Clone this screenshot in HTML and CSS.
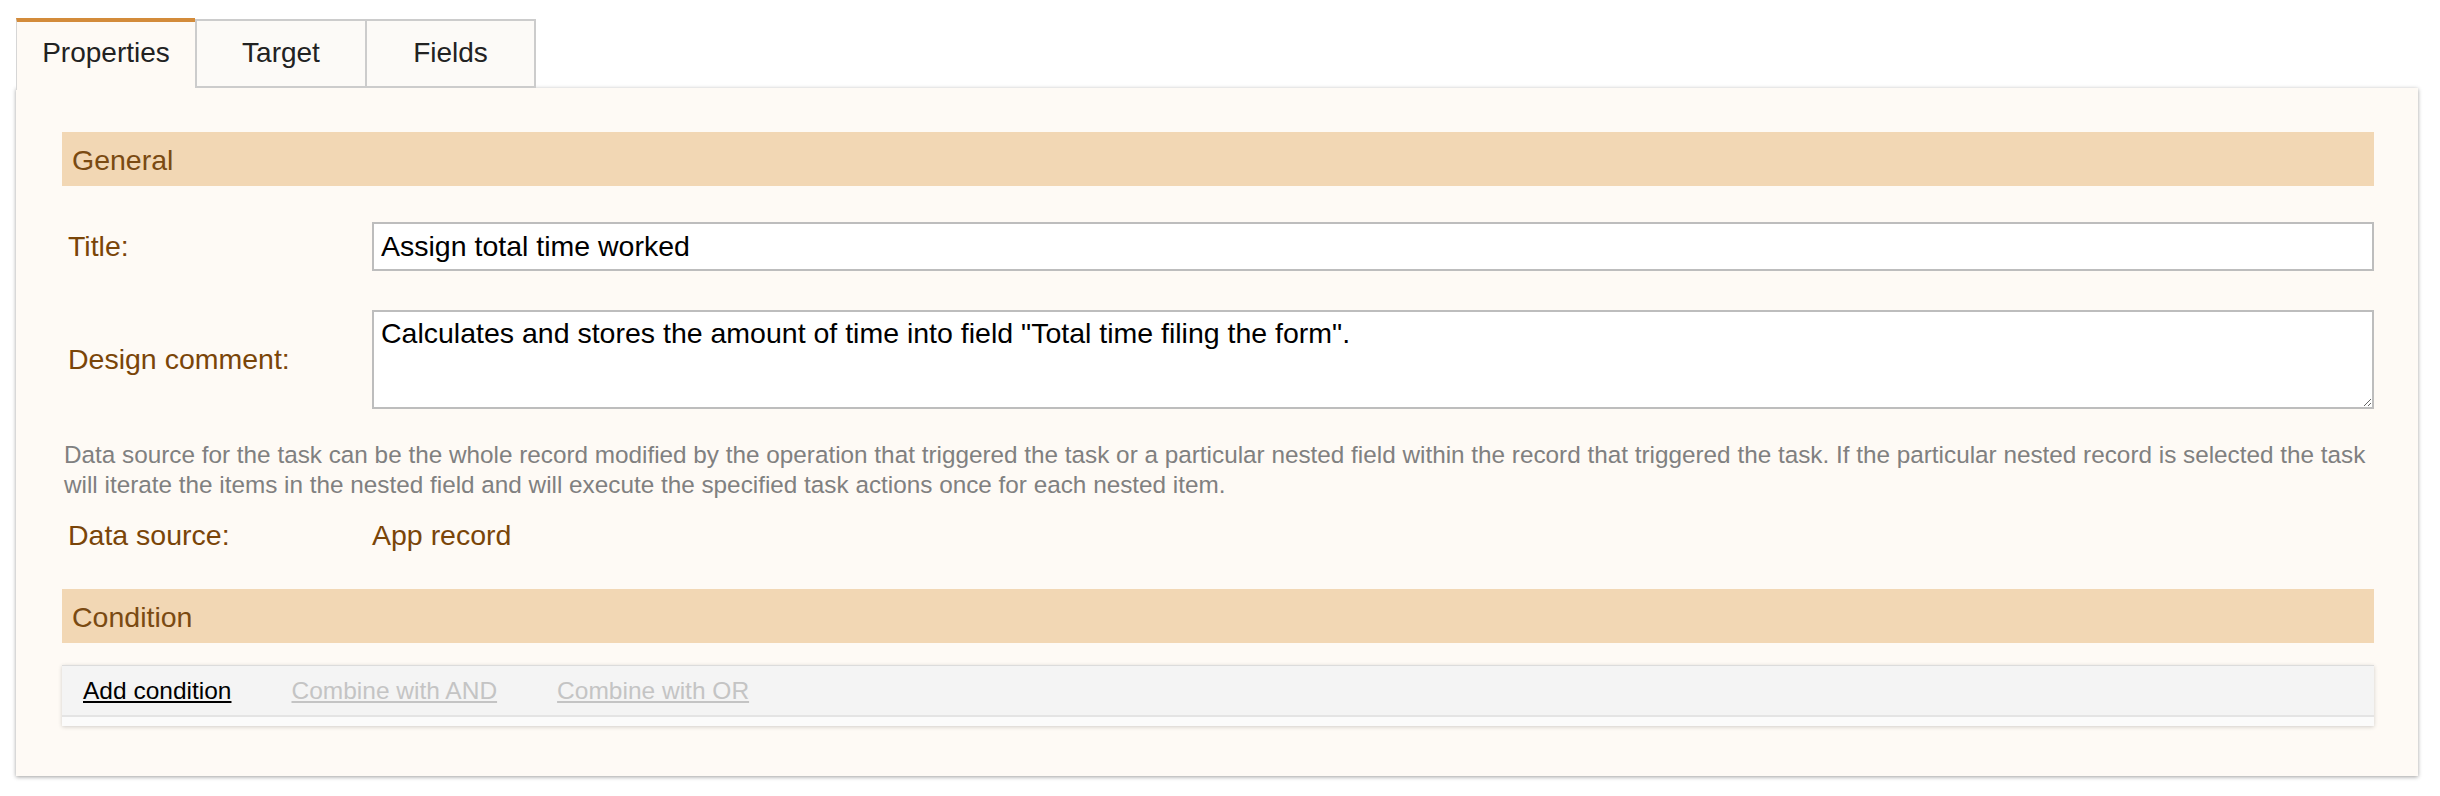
FILE: index.html
```html
<!DOCTYPE html>
<html lang="en">
<head>
<meta charset="utf-8">
<title>Task properties</title>
<link rel="stylesheet" href="styles.css">
</head>
<body>
<div class="tabs">
  <div class="tab tab-active">Properties</div>
  <div class="tab tab-target">Target</div>
  <div class="tab tab-fields">Fields</div>
</div>
<div class="panel">
  <div class="section-head">General</div>
  <div class="form-row row-title">
    <label class="label" for="title">Title:</label>
    <input id="title" class="text-input" type="text" value="Assign total time worked">
  </div>
  <div class="form-row row-comment">
    <label class="label" for="comment">Design comment:</label>
    <textarea id="comment" class="text-area">Calculates and stores the amount of time into field "Total time filing the form".</textarea>
  </div>
  <p class="help">Data source for the task can be the whole record modified by the operation that triggered the task or a particular nested field within the record that triggered the task. If the particular nested record is selected the task will iterate the items in the nested field and will execute the specified task actions once for each nested item.</p>
  <div class="form-row row-source">
    <span class="label">Data source:</span>
    <span class="value">App record</span>
  </div>
  <div class="section-head section-cond">Condition</div>
  <div class="cond-box">
    <div class="cond-actions">
      <a class="cond-link" href="#">Add condition</a>
      <a class="cond-link cond-disabled" href="#">Combine with AND</a>
      <a class="cond-link cond-disabled" href="#">Combine with OR</a>
    </div>
    <div class="cond-body"></div>
  </div>
</div>
</body>
</html>
```
FILE: styles.css
```css
html, body {
  margin: 0;
  padding: 0;
  background: #ffffff;
}

body {
  font-family: "Liberation Sans", Arial, Helvetica, sans-serif;
  font-size: 28px;
  color: #222;
  width: 2440px;
  height: 796px;
  overflow: hidden;
}

/* ---------- tabs ---------- */
.tabs {
  display: flex;
  align-items: flex-end;
  margin-top: 18px;
  padding-left: 16px;
  height: 70px;
}

.tab {
  box-sizing: border-box;
  height: 69px;
  padding-top: 16px;
  line-height: 32px;
  text-align: center;
  color: #222;
  background: #fcfaf7;
  border-top: 2px solid #cccccc;
  border-left: 2px solid #cccccc;
  border-bottom: 2px solid #cccccc;
}

.tab-active {
  position: relative;
  z-index: 1;
  width: 179px;
  height: 72px;
  margin-bottom: -2px;
  padding-top: 15px;
  background: #fefaf5;
  border-top: 4px solid #d38b3a;
  border-left: 1px solid #d6d6d6;
  border-bottom: none;
}

.tab-target {
  width: 170px;
}

.tab-fields {
  width: 171px;
  border-right: 2px solid #cccccc;
}

/* ---------- panel ---------- */
.panel {
  box-sizing: border-box;
  margin-left: 16px;
  width: 2402px;
  height: 688px;
  padding: 44px 44px 50px 46px;
  background: #fefaf5;
  box-shadow: 0 1px 4px rgba(0, 0, 0, 0.38);
}

.section-head {
  height: 54px;
  line-height: 56px;
  padding-left: 10px;
  background: #f2d7b4;
  color: #7a4a12;
  font-size: 28.5px;
}

.section-cond {
  margin-top: 37px;
}

.form-row {
  display: grid;
  grid-template-columns: 310px 1fr;
  align-items: center;
}

.label {
  padding-left: 6px;
  color: #7a4508;
  font-size: 28.5px;
}

.row-title {
  margin-top: 36px;
}

.row-comment {
  margin-top: 39px;
}

.row-source {
  margin-top: 18px;
  line-height: 34px;
}

.value {
  color: #7a4508;
  font-size: 28.5px;
}

.text-input,
.text-area {
  box-sizing: border-box;
  width: 100%;
  margin: 0;
  border: 2px solid #bdbdbd;
  border-radius: 0;
  background: #ffffff;
  color: #000;
  font-family: "Liberation Sans", Arial, Helvetica, sans-serif;
  font-size: 28.5px;
  outline: none;
}

.text-input {
  height: 49px;
  padding: 0 7px;
}

.text-area {
  display: block;
  height: 99px;
  padding: 5px 7px;
  line-height: 32px;
  resize: both;
}

.help {
  margin: 31px 0 0 0;
  padding-left: 2px;
  font-size: 24.3px;
  line-height: 30px;
  color: #808080;
}

/* ---------- condition box ---------- */
.cond-box {
  margin-top: 22px;
  border-top: 1px solid #dcdcdc;
  box-shadow: 0 1px 4px rgba(0, 0, 0, 0.18);
  background: #fbfbfb;
}

.cond-actions {
  display: flex;
  gap: 60px;
  height: 49px;
  line-height: 50px;
  padding-left: 21px;
  background: #f4f4f4;
  border-bottom: 2px solid #e4e4e4;
  font-size: 24.5px;
}

.cond-link {
  color: #000;
  text-decoration: underline;
}

.cond-disabled {
  color: #c4c4c4;
}

.cond-body {
  height: 9px;
  background: #fbfbfb;
}
```
